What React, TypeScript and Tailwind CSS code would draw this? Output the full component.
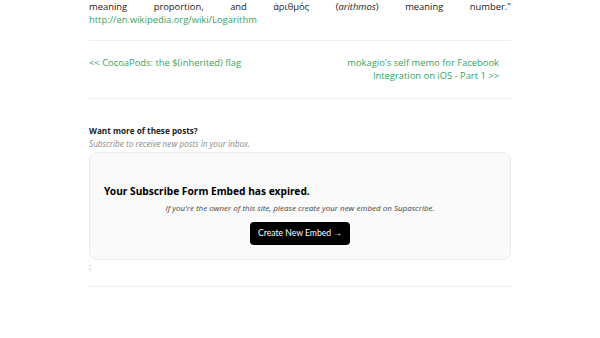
export default function App() {
  return (
    <div className="min-h-screen bg-white" style={{ fontFamily: '"Open Sans", sans-serif' }}>
      <main className="w-[422px] ml-[89px] text-[#222]">
        {/* 記事の末尾 */}
        <p className="text-[9.4px] leading-[13px] text-justify [text-align-last:justify]">
          meaning proportion, and ἀριθμός (<em>arithmos</em>) meaning number."
        </p>
        <p className="text-[9.4px] leading-[13px]">
          <a href="#" className="text-[#34a463]">http://en.wikipedia.org/wiki/Logarithm</a>
        </p>

        <hr className="mt-[14px] border-[#eeeeee]" />

        {/* 前後の記事 */}
        <div className="flex justify-between pt-[15px] pb-[15px] pr-[12px] text-[9.4px] leading-[13px] text-[#34a463]">
          <a href="#">&lt;&lt; CocoaPods: the $(inherited) flag</a>
          <a href="#" className="w-[160px] text-right">
            mokagio's self memo for Facebook Integration on iOS - Part 1 &gt;&gt;
          </a>
        </div>

        <hr className="mt-[1px] border-[#eeeeee]" />

        {/* 購読フォーム */}
        <section className="mt-[25px]">
          <h4 className="text-[8.2px] leading-[13px] font-bold text-[#222]">Want more of these posts?</h4>
          <p className="text-[8.2px] leading-[13px] italic text-[#8a8a8a]">Subscribe to receive new posts in your inbox.</p>
          <div className="mt-[2px] h-[108px] rounded-[8px] border border-[#ececec] bg-[#fafafa] px-[14px] pt-[29px]">
            <h3
              className="text-[10.2px] leading-[18px] font-bold text-black"
              style={{ fontFamily: '"Noto Sans", sans-serif' }}
            >
              Your Subscribe Form Embed has expired.
            </h3>
            <p className="mt-[2px] text-center text-[8px] leading-[12px] italic text-[#444]">
              If you're the owner of this site, please create your new embed on Supascribe.
            </p>
            <div className="mt-[8px] flex justify-center">
              <button
                className="h-[23px] w-[100px] whitespace-nowrap rounded-[4px] bg-black text-[8.6px] text-white"
                style={{ fontFamily: 'Lato, sans-serif' }}
              >
                Create New Embed <span style={{ fontFamily: '"Open Sans", sans-serif' }}>→</span>
              </button>
            </div>
          </div>
          <p className="text-[9px] leading-[12px] text-[#999] mt-[1px]">:</p>
        </section>

        <hr className="mt-[13px] border-[#eeeeee]" />
      </main>
    </div>
  );
}
